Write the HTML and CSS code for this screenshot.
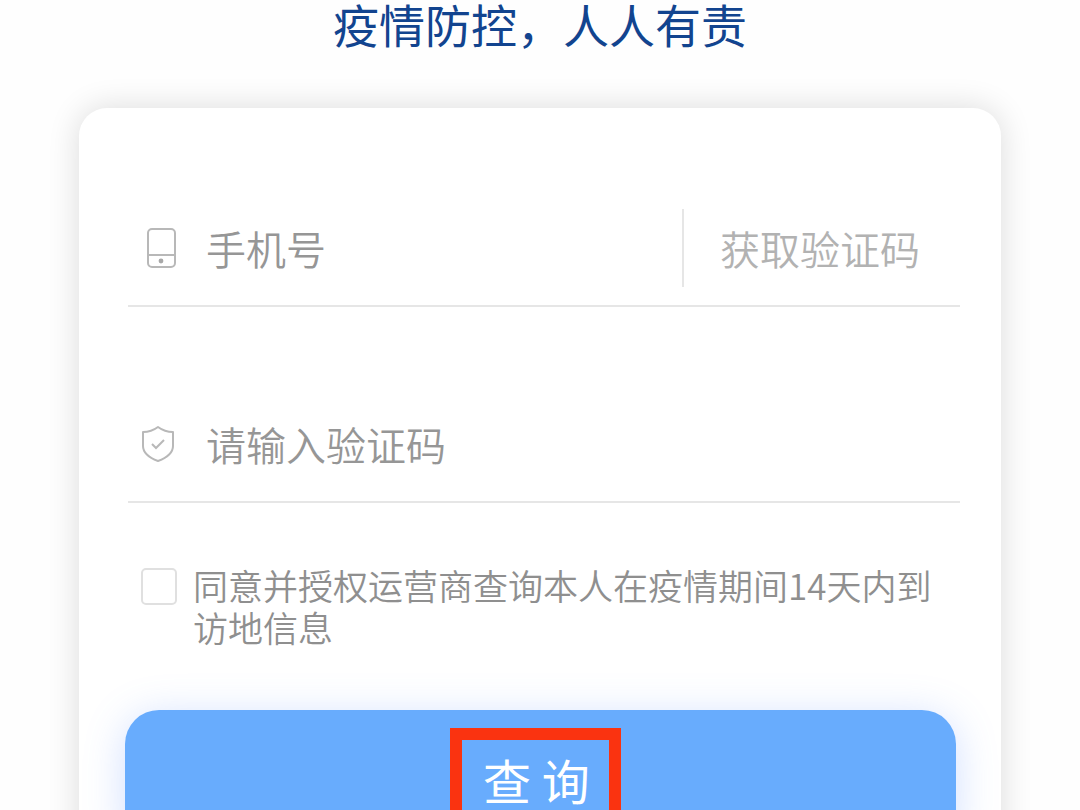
FILE: index.html
```html
<!DOCTYPE html>
<html lang="zh-CN">
<head>
<meta charset="utf-8">
<meta name="viewport" content="width=device-width, initial-scale=1">
<title>疫情防控，人人有责</title>
<link rel="stylesheet" href="styles.css">
</head>
<body>
<main class="page">
  <h1 class="title">疫情防控，人人有责</h1>
  <form class="card">
    <div class="fields">
      <div class="field">
        <label class="field-icon" for="phone" aria-label="手机号">
          <svg width="36" height="44" viewBox="0 0 36 44" fill="none" stroke="#b8b8b8" stroke-width="2">
            <rect x="6" y="3" width="27" height="38" rx="4"/>
            <path d="M6 29H33"/>
            <circle cx="19" cy="35" r="2.4" fill="#a8a8a8" stroke="none"/>
          </svg>
        </label>
        <input class="input" id="phone" type="tel" placeholder="手机号">
        <button class="get-code" type="button">获取验证码</button>
      </div>
      <div class="field">
        <label class="field-icon" for="code" aria-label="验证码">
          <svg width="36" height="44" viewBox="0 0 36 44" fill="none" stroke="#b8b8b8" stroke-width="2">
            <path d="M16 5C12 8 7 10 1 10V24C1 31 8 36 16 39C24 36 31 31 31 24V10C25 10 20 8 16 5Z" stroke-linejoin="round"/>
            <path d="M10 22L14 26L22 18"/>
          </svg>
        </label>
        <input class="input" id="code" type="text" placeholder="请输入验证码">
      </div>
      <div class="consent">
        <input class="checkbox" id="agree" type="checkbox">
        <label class="consent-text" for="agree">同意并授权运营商查询本人在疫情期间14天内到访地信息</label>
      </div>
    </div>
    <button class="submit" type="button">查 询<span class="highlight"></span></button>
  </form>
</main>
</body>
</html>
```
FILE: styles.css
```css
* {
  box-sizing: border-box;
}

body {
  margin: 0;
  height: 100vh;
  overflow: hidden;
  background: #fefefe;
  font-family: "Noto Sans CJK SC", sans-serif;
  font-weight: 350;
}

input,
button {
  margin: 0;
  padding: 0;
  border: 0;
  background: none;
  font: inherit;
}

.page {
  padding: 0 79px;
}

.title {
  margin: 0;
  height: 108px;
  color: #12448f;
  font-size: 46px;
  font-weight: 400;
  line-height: 46px;
  text-align: center;
}

.card {
  padding: 83px 41px 48px 46px;
  border-radius: 28px;
  background: #fff;
  box-shadow: 0 0 32px rgba(0, 0, 0, 0.14);
}

.fields {
  padding-left: 3px;
}

.field {
  display: flex;
  align-items: center;
  height: 116px;
  border-bottom: 2px solid #e6e6e6;
}

.field + .field {
  margin-top: 80px;
}

.field-icon {
  display: flex;
  margin: 0 28px 0 14px;
}

.input {
  flex: 1;
  min-width: 0;
  height: 60px;
  color: #666;
  font-size: 40px;
  outline: none;
}

.input::placeholder {
  color: #969696;
  opacity: 1;
}

.get-code {
  height: 78px;
  padding: 0 40px 0 36px;
  border-left: 2px solid #e6e6e6;
  color: #b2b2b2;
  font-size: 40px;
}

.consent {
  display: flex;
  align-items: flex-start;
  gap: 16px;
  padding: 61px 24px 0 13px;
}

.checkbox {
  appearance: none;
  flex: none;
  width: 36px;
  height: 37px;
  margin-top: 4px;
  border: 2px solid #e0e0e0;
  border-radius: 5px;
}

.consent-text {
  color: #8f8f8f;
  font-size: 35px;
  line-height: 42px;
}

.submit {
  position: relative;
  display: block;
  width: calc(100% - 4px);
  height: 138px;
  margin-top: 62px;
  padding-right: 8px;
  border-radius: 34px;
  background: #68acfd;
  box-shadow: 0 6px 40px rgba(90, 140, 255, 0.28);
  color: #fff;
  font-size: 48px;
  font-weight: 400;
}

.highlight {
  position: absolute;
  top: 18px;
  left: calc(50% - 91px);
  width: 171px;
  height: 106px;
  border: 12px solid #fa3310;
}
```
